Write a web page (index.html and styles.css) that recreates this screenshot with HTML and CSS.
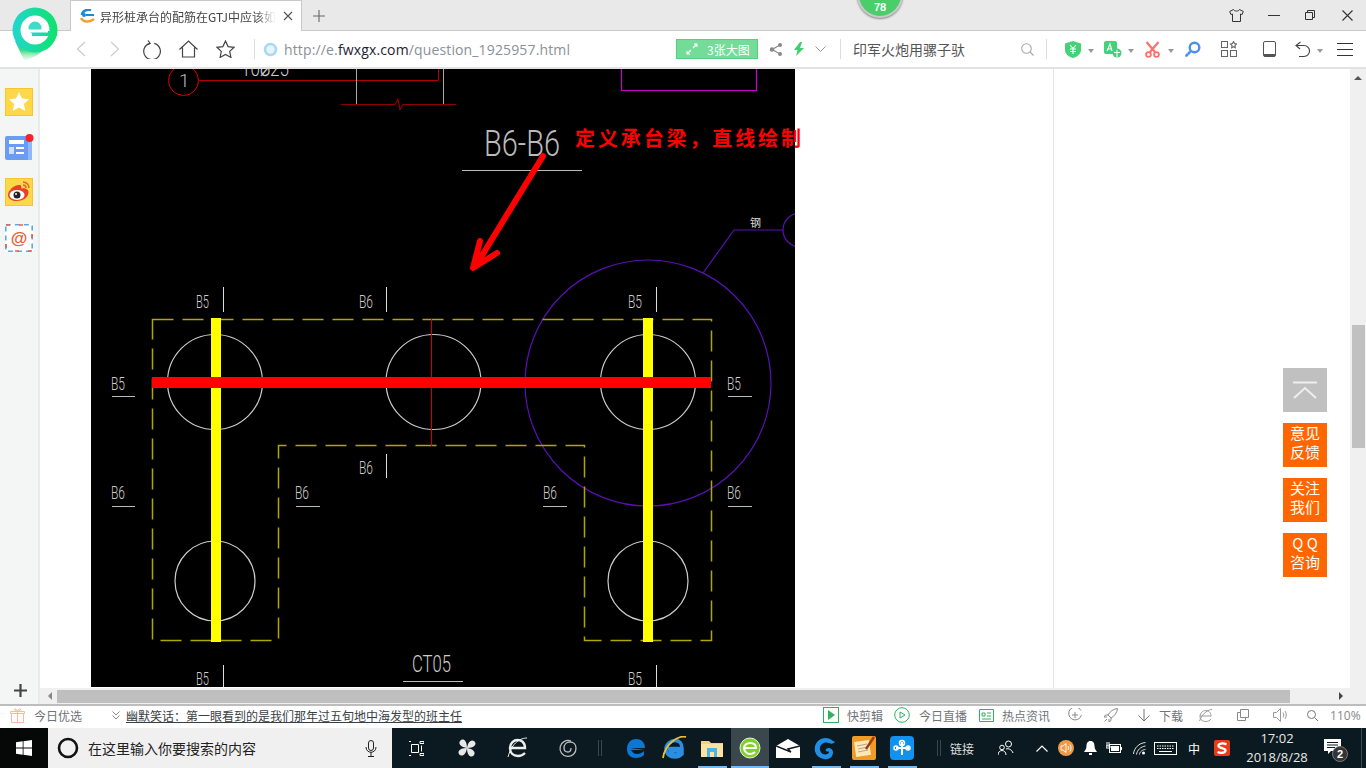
FILE: index.html
```html
<!DOCTYPE html>
<html lang="zh-CN">
<head>
<meta charset="utf-8">
<title>异形桩承台的配筋在GTJ中应该如何绘制</title>
<link rel="stylesheet" href="styles.css">
</head>
<body>
<div class="screen">
  <header class="tabbar">
    <div class="tab">
      <svg class="tab-ico" width="16" height="14" viewBox="0 0 16 14"><path d="M2 6C2 2 7 0 11 1" fill="none" stroke="#1e88d8" stroke-width="2.4"/><path d="M1 9c2 4 8 5 13 1" fill="none" stroke="#f0a030" stroke-width="2.4"/><path d="M6 6h8" stroke="#1e88d8" stroke-width="2"/><circle cx="4" cy="6" r="2" fill="#1e88d8"/></svg>
      <span class="tab-title">异形桩承台的配筋在GTJ中应该如</span>
      <svg class="tab-close" width="10" height="10" viewBox="0 0 10 10"><path d="M1 1l8 8M9 1l-8 8" stroke="#555" stroke-width="1.2"/></svg>
    </div>
    <svg class="tab-add" width="14" height="14" viewBox="0 0 14 14"><path d="M7 1v12M1 7h12" stroke="#666" stroke-width="1.1"/></svg>
    <div class="winctl">
      <svg width="15" height="13" viewBox="0 0 15 13"><path d="M4.5.5L.7 2.500l1.200 3 1.600-.5v7.500h8V5l1.600.5 1.200-3L10.500.5c-.5 2-5.500 2-6 0z" fill="none" stroke="#333" stroke-width="1"/></svg>
      <svg class="ml-24" width="12" height="12" viewBox="0 0 12 12"><path d="M0 6.500h12" stroke="#333"/></svg>
      <svg class="ml-25" width="10" height="10" viewBox="0 0 10 10"><path d="M.5 2.500h7v7h-7zM2.500 2.500v-2h7v7h-2" fill="none" stroke="#333"/></svg>
      <svg class="ml-27" width="11" height="11" viewBox="0 0 11 11"><path d="M.5.500l10 10M10.500.500l-10 10" stroke="#333" stroke-width="1.100"/></svg>
    </div>
  </header>

  <nav class="toolbar">
    <svg class="ml-76" width="10" height="16" viewBox="0 0 10 16"><path d="M9 1L1.500 8 9 15" fill="none" stroke="#ccc" stroke-width="1.200"/></svg>
    <svg class="ml-24" width="10" height="16" viewBox="0 0 10 16"><path d="M1 1l7.500 7L1 15" fill="none" stroke="#ccc" stroke-width="1.200"/></svg>
    <svg class="ml-23" width="18" height="19" viewBox="0 0 18 19"><path d="M5 .5l2.200 3L4 5M6.800 3.300a8.300 8.300 0 1 0 4.500 0" fill="none" stroke="#444" stroke-width="1.200"/></svg>
    <svg class="ml-18" width="19" height="18" viewBox="0 0 19 18"><path d="M.5 9.500L9.500 1l9 8.500M3.500 7.500v9.500h12V7.500" fill="none" stroke="#444" stroke-width="1.200"/></svg>
    <svg class="ml-18" width="19" height="18" viewBox="0 0 19 18"><path d="M9.500 1l2.600 5.600 6 .7-4.400 4.100 1.200 6-5.400-3-5.400 3 1.200-6L.9 7.300l6-.7z" fill="none" stroke="#444" stroke-width="1.200"/></svg>
    <i class="vsep ml-19"></i>
    <svg class="ml-8" width="15" height="15" viewBox="0 0 15 15"><circle cx="7.500" cy="7.500" r="6.800" fill="#a9d8f5"/><circle cx="7.500" cy="7.500" r="4.200" fill="#e6f5fd"/></svg>
    <span class="url ml-6">http://e.<b>fwxgx.com</b>/question_1925957.html</span>
    <span class="bigimg ml-106">
      <svg width="12" height="12" viewBox="0 0 12 12"><path d="M1 11l4-4M7 5l4-4M8 1h3v3M1 8v3h3" fill="none" stroke="#fff" stroke-width="1.100"/></svg>
      <span>3张大图</span>
    </span>
    <svg class="ml-12" width="12" height="13" viewBox="0 0 12 13"><path d="M10 2L2 6.500l8 4.500" fill="none" stroke="#888" stroke-width="1.200"/><circle cx="10" cy="2" r="2" fill="#888"/><circle cx="2" cy="6.500" r="2.200" fill="#888"/><circle cx="10" cy="11" r="2" fill="#888"/></svg>
    <svg class="ml-12" width="10" height="14" viewBox="0 0 10 14"><path d="M6 0L0 8h3.500L2 14l8-8H6l2-6z" fill="#3fd06c"/></svg>
    <svg class="ml-11" width="11" height="7" viewBox="0 0 11 7"><path d="M.5.500l5 5 5-5" fill="none" stroke="#999"/></svg>
    <i class="vsep ml-14"></i>
    <span class="searchtext ml-12">印军火炮用骡子驮</span>
    <svg class="ml-56" width="13" height="13" viewBox="0 0 13 13"><circle cx="5.500" cy="5.500" r="4.800" fill="none" stroke="#aaa" stroke-width="1.100"/><path d="M9 9l3.500 3.500" stroke="#aaa" stroke-width="1.200"/></svg>
    <i class="vsep ml-12"></i>
    <svg class="ml-18" width="16" height="17" viewBox="0 0 16 17"><path d="M8 0l8 2.500V9c0 4-4 7-8 8-4-1-8-4-8-8V2.500z" fill="#45d276"/><path d="M5 4l3 3.500L11 4M5 8h6M5 10.500h6M8 7.500V13" fill="none" stroke="#fff" stroke-width="1.100"/></svg>
    <i class="caret ml-7"></i>
    <svg class="ml-10" width="18" height="17" viewBox="0 0 18 17"><rect width="13" height="13" rx="2" fill="#45d276"/><path d="M3 10l3-7 2 7M4 8h3.500" fill="none" stroke="#fff" stroke-width="1.100"/><circle cx="13" cy="12" r="4.500" fill="#45d276"/><path d="M10 11.500h6M13 9v7" stroke="#fff"/></svg>
    <i class="caret ml-6"></i>
    <svg class="ml-11" width="15" height="17" viewBox="0 0 15 17"><path d="M1.500 1l8.500 10M13.500 1L5 11" stroke="#ff6f6f" stroke-width="2.200"/><circle cx="3.500" cy="13.500" r="2.400" fill="none" stroke="#ff6f6f" stroke-width="1.800"/><circle cx="11.500" cy="13.500" r="2.400" fill="none" stroke="#ff6f6f" stroke-width="1.800"/></svg>
    <i class="caret ml-8"></i>
    <svg class="ml-10" width="17" height="17" viewBox="0 0 17 17"><circle cx="10.500" cy="6.500" r="4.800" fill="none" stroke="#4d8ef0" stroke-width="2.400"/><path d="M7 10l-5.500 5.500M2 13l2 2M4 11l2 2" stroke="#4d8ef0" stroke-width="1.800"/></svg>
    <svg class="ml-20" width="16" height="16" viewBox="0 0 16 16"><path d="M.5.500h6v6h-6zM.5 9.500h6v6h-6zM9.500 9.500h6v6h-6zM12.500.5l1 2 2 .5-1.500 1.500.3 2.200-1.800-1-1.800 1 .3-2.200L9.500 3l2-.5z" fill="none" stroke="#666" stroke-width="1.100"/></svg>
    <svg class="ml-26" width="13" height="16" viewBox="0 0 13 16"><rect x=".5" y=".5" width="12" height="15" rx="1.500" fill="none" stroke="#555"/><rect x="1" y="13" width="11" height="2.500" fill="#555"/></svg>
    <svg class="ml-19" width="15" height="17" viewBox="0 0 15 17"><path d="M5.500 1L1 4.500 5 8M1.500 4.500H9a5.500 5.500 0 0 1 0 11H4" fill="none" stroke="#444" stroke-width="1.100"/></svg>
    <i class="caret ml-7"></i>
    <svg class="ml-14" width="16" height="13" viewBox="0 0 16 13"><path d="M0 .5h16M0 6.500h16M0 12.500h16" stroke="#333"/></svg>
  </nav>

  <div class="main">
    <aside class="sidebar">
      <div class="side-icons">
        <svg width="28" height="28" viewBox="0 0 28 28"><rect x=".5" y=".5" width="27" height="27" fill="#ffd84a" stroke="#f7c52e"/><path d="M14 4l3 6.500 7 .8-5.200 4.700 1.500 7L14 19.500 7.700 23l1.500-7L4 11.300l7-.8z" fill="#fff"/></svg>
        <svg width="29" height="26" viewBox="0 0 29 26"><rect y="2" width="27" height="24" rx="2" fill="#6a9cf5"/><rect x="23" y="2" width="4" height="24" fill="#8fb7fa"/><rect x="4" y="6" width="15" height="4" fill="#fff"/><rect x="4" y="13" width="5" height="7" fill="#cfe0fd"/><path d="M11 14h8M11 19h8" stroke="#fff" stroke-width="2"/><circle cx="24.500" cy="4" r="4" fill="#ff2020"/></svg>
        <svg width="28" height="28" viewBox="0 0 28 28"><rect x=".5" y=".5" width="27" height="27" fill="#ffd84a" stroke="#f7c52e"/><path d="M3 17c0-5 7-11 12-10 2 .5 1 3 1.500 3.500 2-1 7 0 7 3.500 0 6-6 9-12 9-4 0-8.500-2-8.500-6z" fill="#e8412a"/><ellipse cx="12" cy="17" rx="7.500" ry="5" fill="#fff"/><circle cx="12" cy="17" r="3.500" fill="#222"/><circle cx="11" cy="16" r="1" fill="#fff"/><path d="M18 4a6 6 0 0 1 6 6M18 7a3 3 0 0 1 3 3" fill="none" stroke="#e8612a" stroke-width="1.500"/></svg>
        <svg width="28" height="28" viewBox="0 0 28 28"><rect width="28" height="28" fill="#fff"/><rect x=".8" y=".8" width="26.400" height="26.400" fill="none" stroke="#58aaf0" stroke-width="1.600" stroke-dasharray="5 4"/><path d="M1 1h4M14 1h4M27 10v4M1 20v4M10 27h4M23 27h4" stroke="#f0603c" stroke-width="1.600"/><text class="at-sign" x="14" y="20">@</text></svg>
      </div>
      <svg class="side-add" width="13" height="13" viewBox="0 0 13 13"><path d="M6.500 0v13M0 6.500h13" stroke="#444" stroke-width="2.200"/></svg>
    </aside>

    <div class="viewport">
      <div class="page-row">
        <main class="article">
          <svg class="cad" width="704" height="618" viewBox="91 69 704 618">
            <svg x="91" y="69" width="704" height="618" viewBox="91 69 704 618">
              <rect x="91" y="69" width="704" height="618" fill="#000"/>
              <g fill="none">
                <circle cx="183.500" cy="80.500" r="15" stroke="#e00000"/>
                <path d="M199 80.500h239.500V69" stroke="#b00000"/>
                <path d="M356.500 69v35M443.500 69v35" stroke="#aaa"/>
                <path d="M341 104.500h54l3-5 2 10 3-5h53" stroke="#900000" stroke-width="1.200"/>
                <path d="M621.500 69v21.500h135V69" stroke="#c800c8" stroke-width="1.200"/>
                <path d="M462 170.500h120M112 396.500h23M728 396.500h24M112 506.500h23M296 506.500h24M543 506.500h24M728 506.500h24M403 681.500h60" stroke="#bbb"/>
                <path d="M223.500 287v25M386.500 287v25M656.500 287v25M386.500 454v24M223.500 665v22M656.500 665v22" stroke="#ddd"/>
                <circle cx="648" cy="383" r="123" stroke="#5a10b8" stroke-width="1.200"/>
                <path d="M703 273l31-43h49" stroke="#5a10b8" stroke-width="1.200"/>
                <circle cx="800" cy="230" r="17" stroke="#5a10b8" stroke-width="1.200"/>
                <path class="dash" d="M152.500 319.500h559v321h-127v-195h-306v195h-126z"/>
                <circle cx="215" cy="382" r="47.500" stroke="#ccc" stroke-width="1.200"/>
                <circle cx="433.500" cy="382" r="47.500" stroke="#ccc" stroke-width="1.200"/>
                <circle cx="648" cy="382" r="47.500" stroke="#ccc" stroke-width="1.200"/>
                <circle cx="215" cy="581" r="40" stroke="#ccc" stroke-width="1.200"/>
                <circle cx="648" cy="581" r="40" stroke="#ccc" stroke-width="1.200"/>
                <path d="M431.500 319v127" stroke="#d00000"/>
              </g>
              <rect x="211" y="318" width="10" height="324" fill="#ff0"/>
              <rect x="643" y="318" width="10" height="324" fill="#ff0"/>
              <rect x="152" y="377" width="559" height="11" fill="#f00"/>
              <text class="cad-big" x="484" y="156" textLength="76" lengthAdjust="spacingAndGlyphs">B6-B6</text>
              <path d="M543 156L478 262M480 241l-7 27 24-15" fill="none" stroke="#f00" stroke-width="6" stroke-linecap="round" stroke-linejoin="round"/>
              <text class="cad-small" x="750" y="227">钢</text>
              <text class="cad-mid" x="412" y="672" textLength="39" lengthAdjust="spacingAndGlyphs">CT05</text>
              <text class="cad-clip" x="241" y="76" textLength="48" lengthAdjust="spacingAndGlyphs">10⌀25</text>
              <text class="cad-one" x="179" y="87">1</text>
              <g class="cad-label">
                <text x="196" y="308" textLength="13" lengthAdjust="spacingAndGlyphs">B5</text>
                <text x="359" y="308" textLength="14" lengthAdjust="spacingAndGlyphs">B6</text>
                <text x="628" y="308" textLength="14" lengthAdjust="spacingAndGlyphs">B5</text>
                <text x="111" y="390" textLength="14" lengthAdjust="spacingAndGlyphs">B5</text>
                <text x="727" y="390" textLength="14" lengthAdjust="spacingAndGlyphs">B5</text>
                <text x="359" y="474" textLength="14" lengthAdjust="spacingAndGlyphs">B6</text>
                <text x="111" y="499" textLength="14" lengthAdjust="spacingAndGlyphs">B6</text>
                <text x="295" y="499" textLength="14" lengthAdjust="spacingAndGlyphs">B6</text>
                <text x="543" y="499" textLength="14" lengthAdjust="spacingAndGlyphs">B6</text>
                <text x="727" y="499" textLength="14" lengthAdjust="spacingAndGlyphs">B6</text>
                <text x="196" y="685" textLength="13" lengthAdjust="spacingAndGlyphs">B5</text>
                <text x="628" y="685" textLength="14" lengthAdjust="spacingAndGlyphs">B5</text>
              </g>
            </svg>
            <text class="cad-note" x="575" y="146" textLength="226">定义承台梁&#xFF0C;直线绘制</text>
          </svg>
        </main>
        <div class="rest"></div>
        <div class="vscroll">
          <i class="arrow-up"></i>
          <div class="vthumb"></div>
        </div>
      </div>
      <div class="hscroll">
        <i class="arrow-left"></i>
        <div class="hthumb"></div>
        <i class="arrow-right"></i>
      </div>
    </div>
  </div>

  <footer class="statusbar">
    <svg class="ml-10" width="15" height="15" viewBox="0 0 15 15"><path d="M1.500 5.500h12v9h-12zM.5 3.500h14v2H.5zM7.500 3.500v11M7.500 3.500C5 3.500 3.500 1 5 .8S7.500 3.500 7.500 3.500s1-3 2.500-2.700 0 2.700-2.500 2.700z" fill="none" stroke="#f9b99a"/></svg>
    <span class="ml-9">今日优选</span>
    <svg class="ml-30" width="8" height="9" viewBox="0 0 8 9"><path d="M.5.500L4 4l3.500-3.500M.5 4.500L4 8l3.500-3.500" fill="none" stroke="#888"/></svg>
    <a class="news ml-6">幽默笑话&#xFF1A;第一眼看到的是我们那年过五旬地中海发型的班主任</a>
    <svg class="ml-361" width="16" height="16" viewBox="0 0 16 16"><rect x=".5" y=".5" width="15" height="15" fill="none" stroke="#2fb15e"/><path d="M5 3l7 5-7 5z" fill="#2fb15e"/></svg>
    <span class="ml-8">快剪辑</span>
    <svg class="ml-11" width="16" height="16" viewBox="0 0 16 16"><circle cx="8" cy="8" r="7.300" fill="none" stroke="#2fb15e"/><path d="M6 5v6l5-3z" fill="none" stroke="#2fb15e"/></svg>
    <span class="ml-9">今日直播</span>
    <svg class="ml-12" width="15" height="15" viewBox="0 0 15 15"><path d="M.5 1.500h14v12H.5z" fill="none" stroke="#2fb15e"/><path d="M3 5h3v3H3zM8 5h4M8 8h4M3 11h9" fill="none" stroke="#2fb15e"/></svg>
    <span class="ml-8">热点资讯</span>
    <svg class="ml-18" width="14" height="14" viewBox="0 0 14 14"><path d="M13 2.500A6.500 6.500 0 1 0 13.500 7M7 4v6M4 7h6" fill="none" stroke="#888"/></svg>
    <svg class="ml-22" width="14" height="14" viewBox="0 0 14 14"><path d="M13.500.5C9 1 6 3.500 4 7l3 3c3.500-2 6-5 6.500-9.500zM4 7H1.500L0 9h3M7 10v2.500L5 14v-3M3 11l-2.500 2.500" fill="none" stroke="#888"/></svg>
    <svg class="ml-20" width="12" height="13" viewBox="0 0 12 13"><path d="M6 0v12M.5 6.500L6 12l5.500-5.500" fill="none" stroke="#777"/></svg>
    <span class="ml-9">下载</span>
    <svg class="ml-16" width="13" height="13" viewBox="0 0 13 13"><path d="M1 7h11C12 3 9 1.500 6.500 1.500S1 4 1 7.500 4 12.500 7 12.500c2 0 4-1 5-2.500M13 .5C10 .5 4 3 .5 12" fill="none" stroke="#999"/></svg>
    <svg class="ml-25" width="12" height="12" viewBox="0 0 12 12"><path d="M3.500.5h8v8h-8zM3.500 3.500H.5v8h8V8.500" fill="none" stroke="#888"/></svg>
    <svg class="ml-24" width="15" height="14" viewBox="0 0 15 14"><path d="M.5 4.500h3L7.500.5v13l-4-4h-3zM10 4.500c1 1.500 1 3.500 0 5M12 3c1.700 2.500 1.700 5.500 0 8" fill="none" stroke="#999"/></svg>
    <svg class="ml-19" width="11" height="11" viewBox="0 0 11 11"><circle cx="4.500" cy="4.500" r="4" fill="none" stroke="#777"/><path d="M7.500 7.500l3.500 3.500" stroke="#777"/></svg>
    <span class="ml-12 zoomv">110%</span>
  </footer>

  <div class="taskbar">
    <div class="start">
      <svg width="16" height="16" viewBox="0 0 16 16"><path d="M0 2.300l6.700-1V7.500H0zM7.500 1.200L16 0v7.500H7.500zM0 8.400h6.700v6.300L0 13.700zM7.500 8.400H16V16l-8.500-1.200z" fill="#fff"/></svg>
    </div>
    <div class="tsearch">
      <svg width="22" height="22" viewBox="0 0 22 22"><circle cx="11" cy="11" r="9" fill="none" stroke="#111" stroke-width="2.600"/></svg>
      <span class="tsearch-text">在这里输入你要搜索的内容</span>
      <svg class="mic" width="12" height="17" viewBox="0 0 12 17"><rect x="3.500" y=".5" width="5" height="10" rx="2.500" fill="none" stroke="#222"/><path d="M1 7c0 7 10 7 10 0M6 12v4M3 16.500h6" fill="none" stroke="#222"/></svg>
    </div>
    <div class="tcell wide48"><svg width="15" height="15" viewBox="0 0 15 15"><path d="M0 .5h2M0 14.500h2M2.500 3.500h7v8h-7zM11 .5h4v2h-4zM12.500 4.500v6M11 12.500h4v2h-4z" fill="none" stroke="#fff"/></svg></div>
    <div class="tcell wide50 ml-2"><svg width="20" height="20" viewBox="0 0 20 20"><path d="M10 10C4 9 1 6 3 3c2-3 7-2 7 7zM10 10c1-6 4-9 7-7 3 2 2 7-7 7zM10 10c6 1 9 4 7 7-2 3-7 2-7-7zM10 10c-1 6-4 9-7 7-3-2-2-7 7-7z" fill="#e8e8e8"/></svg></div>
    <div class="tcell wide50"><svg width="21" height="22" viewBox="0 0 21 22"><path d="M4 11h14C18 5 14 3 10.500 3S3 6 3 11s3.500 8 8 8c3 0 5-1 7-3" fill="none" stroke="#eee" stroke-width="2.400"/><path d="M20 1C14 1 5 5 1 20" fill="none" stroke="#eee"/></svg></div>
    <div class="tcell wide50"><svg width="20" height="20" viewBox="0 0 20 20"><path d="M14 3a8 8 0 1 0 5 7c0-4-3-6-6-6-4 0-6 3-6 6s2 4 4 4 3-2 3-4" fill="none" stroke="#bbb" stroke-width="1.300"/></svg></div>
    <div class="tsep-cell"><i class="tsep"></i></div>
    <div class="tcell app"><svg width="20" height="21" viewBox="0 0 20 21"><path d="M4 10h15C19 4 15 1 10 1S1 5 1 11s4 9 9 9c3 0 6-1 8-3v-4c-2 2-4 3-7 3s-5-2-6-4h14" fill="#0a78d7"/></svg></div>
    <div class="tcell app"><svg width="25" height="24" viewBox="0 0 25 24"><path d="M6 12.500h14C20 7 17 4.500 13 4.500S4 8 4 13s4 8 9 8c3 0 5-1 7-3v-2c-2 2-4 3-6.500 3S8 17 8 15h12" fill="none" stroke="#2a8fe0" stroke-width="3.500"/><path d="M24 1C16-1 3 8 1 22" fill="none" stroke="#f0c030" stroke-width="1.800"/></svg></div>
    <div class="tcell app run"><svg width="22" height="18" viewBox="0 0 22 18"><path d="M0 2h8l2 2h12v14H0z" fill="#f4d27a"/><path d="M0 5h22v13H0z" fill="#f9e39e"/><rect x="6" y="9" width="10" height="9" fill="#4db3ea"/><rect x="9" y="13" width="4" height="5" fill="#f9e39e"/></svg></div>
    <div class="tcell app active"><svg width="22" height="22" viewBox="0 0 22 22"><circle cx="11" cy="11" r="10" fill="#7fd02c"/><circle cx="11" cy="11" r="10" fill="none" stroke="#e6f5d2"/><path d="M5 11h12C17 7 14 6 11 6s-6 2-6 5 3 6 6 6c2 0 4-1 5-2" fill="none" stroke="#fff" stroke-width="2"/></svg></div>
    <div class="tcell app"><svg width="24" height="19" viewBox="0 0 24 19"><path d="M0 7L12 0l12 7v12H0z" fill="#fff"/><path d="M0 7l15 6-3-3 12-3" fill="none" stroke="#0c1a20" stroke-width="1.400"/></svg></div>
    <div class="tcell app run"><svg width="24" height="23" viewBox="0 0 24 23"><path d="M19 4C15 0 8 0 4 4-1 9 0 17 5 20c4 3 11 3 13-1 2-3 1-8-3-8-3 0-4 2-3 3s3 0 3 1c0 3-8 4-9-2-1-5 4-9 9-7 2 1 4 1 6-1z" fill="#1e90e8"/></svg></div>
    <div class="tcell app run"><svg width="24" height="24" viewBox="0 0 24 24"><rect width="24" height="24" rx="2" fill="#f09a28"/><rect x="3" y="5" width="15" height="15" transform="rotate(-8 10 12)" fill="#fbe9b8"/><path d="M5 10l10-2M6 13l10-2M6 16l10-2" stroke="#b98" stroke-width=".9"/><path d="M22 1L14 13" stroke="#a03a10" stroke-width="2.400"/></svg></div>
    <div class="tcell app run"><svg width="24" height="24" viewBox="0 0 24 24"><rect width="24" height="24" rx="4" fill="#1092ee"/><path d="M12 6v13M6 12h13" stroke="#fff" stroke-width="2"/><circle cx="12" cy="7" r="2.500" fill="none" stroke="#fff" stroke-width="1.500"/><circle cx="6" cy="12" r="2" fill="none" stroke="#fff" stroke-width="1.500"/><circle cx="18" cy="12" r="2" fill="none" stroke="#fff" stroke-width="1.500"/></svg></div>
    <i class="tsep ml-16"></i>
    <span class="tlink ml-9">链接</span>
    <svg class="ml-24" width="16" height="16" viewBox="0 0 16 16"><circle cx="10.500" cy="4" r="3" fill="none" stroke="#fff"/><circle cx="4" cy="7.500" r="2.300" fill="none" stroke="#fff"/><path d="M8 9c3-1 6 1 7 4M0 15c0-3 2-4.500 4-4.500S8 12 8 15" fill="none" stroke="#fff"/></svg>
    <svg class="ml-22" width="12" height="7" viewBox="0 0 12 7"><path d="M.5 6.500L6 1l5.500 5.500" fill="none" stroke="#fff" stroke-width="1.200"/></svg>
    <svg class="ml-10" width="16" height="16" viewBox="0 0 16 16"><circle cx="8" cy="8" r="8" fill="#f09a48"/><path d="M3 6h2l3-2.500v9L5 10H3zM10 6c.7 1.300.7 2.700 0 4M12 4.500c1.300 2.200 1.300 4.800 0 7" fill="none" stroke="#fff" stroke-width=".9"/></svg>
    <svg class="ml-10" width="13" height="14" viewBox="0 0 13 14"><path d="M6.500 0C3.500 0 2.500 2.500 2.500 5c0 3-1.500 4-2.500 6h13c-1-2-2.500-3-2.500-6 0-2.500-1-5-4-5z" fill="#fff"/><rect x="5" y="12" width="3" height="2" fill="#fff"/></svg>
    <svg class="ml-9" width="16" height="12" viewBox="0 0 16 12"><rect x="3.500" y="2.500" width="11" height="8" fill="none" stroke="#fff"/><rect x="5" y="4" width="8" height="5" fill="#fff"/><rect x="15" y="5" width="1" height="3" fill="#fff"/><path d="M1 0v4M3 0v4M0 4h4v2H0z" stroke="#fff" fill="none"/></svg>
    <svg class="ml-11" width="13" height="13" viewBox="0 0 13 13"><path d="M.5 12C1 6 6 1 12.500.5M3.500 12.500C4 8 8 4.500 12.500 4M6.500 12.500c0-2.500 3-5 6-5" fill="none" stroke="#ddd"/><circle cx="10.500" cy="11" r="1.500" fill="#fff"/></svg>
    <svg class="ml-8" width="23" height="13" viewBox="0 0 23 13"><rect x=".5" y=".5" width="22" height="12" fill="none" stroke="#fff"/><path d="M3 4h17M3 6.500h17" stroke="#fff" stroke-dasharray="1.500 1"/><path d="M5 9.500h13" stroke="#fff"/></svg>
    <span class="tlang ml-11">中</span>
    <svg class="ml-14" width="16" height="16" viewBox="0 0 16 16"><rect width="16" height="16" rx="2" fill="#e83c18"/><path d="M12.500 4.500C9 2.500 4 3.500 4.500 6s7 2 7 4.500-5 3-8 1.500" fill="none" stroke="#fff" stroke-width="2.300"/></svg>
    <div class="clock ml-17"><span>17:02</span><span>2018/8/28</span></div>
    <div class="notif ml-17">
      <svg width="17" height="16" viewBox="0 0 17 16"><path d="M0 0h17v12H7l-3 3v-3H0z" fill="#fff"/><path d="M3 3.500h11M3 6h11M3 8.500h8" stroke="#0c1a20"/></svg>
      <span class="notif-badge">2</span>
    </div>
    <i class="desk-line"></i>
  </div>

  <div class="logo">
    <svg width="46" height="54" viewBox="0 0 46 54">
      <defs>
        <linearGradient id="lg" x1="0" y1="0" x2="1" y2="0"><stop offset="0" stop-color="#22d6cf"/><stop offset="1" stop-color="#0ee36c"/></linearGradient>
        <linearGradient id="lt" x1="0" y1="0" x2="0" y2="1"><stop offset="0" stop-color="#25b8ea"/><stop offset=".5" stop-color="#3fdf7a"/><stop offset="1" stop-color="#c8f0d8" stop-opacity=".4"/></linearGradient>
      </defs>
      <path d="M3 34l9 19c8-1 20-7 24-17z" fill="url(#lt)"/>
      <circle cx="23" cy="23" r="22.500" fill="url(#lg)"/>
      <circle cx="23" cy="23" r="14.500" fill="#fff"/>
      <circle cx="23" cy="21" r="6.500" fill="#3cdcc8"/>
      <path d="M20 24h25v5H20z" fill="url(#lg)"/>
      <path d="M10 22.500h26v3H10z" fill="#fff"/>
    </svg>
  </div>
  <div class="score">78</div>

  <div class="floatbar">
    <div class="fb-top"><svg width="24" height="18" viewBox="0 0 24 18"><path d="M0 1.500h24M1 17L12 7l11 10" fill="none" stroke="#eee" stroke-width="2"/></svg></div>
    <div class="fb">意见<br>反馈</div>
    <div class="fb">关注<br>我们</div>
    <div class="fb">Q Q<br>咨询</div>
  </div>
</div>
</body>
</html>
```
FILE: styles.css
```css
* { box-sizing: border-box; }
html, body { margin: 0; padding: 0; }
body { font-family: "Noto Sans CJK SC", "Noto Sans", sans-serif; font-size: 12px; color: #555; overflow: hidden; }
i { display: block; font-style: normal; }
svg { display: block; flex: none; }

.ml-2 { margin-left: 2px; } .ml-6 { margin-left: 6px; } .ml-7 { margin-left: 7px; } .ml-8 { margin-left: 8px; }
.ml-9 { margin-left: 9px; } .ml-10 { margin-left: 10px; } .ml-11 { margin-left: 11px; } .ml-12 { margin-left: 12px; }
.ml-14 { margin-left: 14px; } .ml-16 { margin-left: 16px; } .ml-17 { margin-left: 17px; } .ml-18 { margin-left: 18px; }
.ml-19 { margin-left: 19px; } .ml-20 { margin-left: 20px; } .ml-22 { margin-left: 22px; } .ml-23 { margin-left: 23px; }
.ml-24 { margin-left: 24px; } .ml-25 { margin-left: 25px; } .ml-26 { margin-left: 26px; } .ml-27 { margin-left: 27px; }
.ml-30 { margin-left: 30px; } .ml-56 { margin-left: 56px; } .ml-76 { margin-left: 76px; } .ml-106 { margin-left: 106px; }
.ml-361 { margin-left: 361px; }

.screen { position: relative; width: 1366px; height: 768px; display: flex; flex-direction: column; overflow: hidden; background: #fff; }

/* tabs */
.tabbar { height: 31px; flex: none; display: flex; align-items: flex-start; padding-left: 70px; background: #e9e9e9; border-bottom: 1px solid #c9c9c9; }
.tab { width: 232px; height: 31px; display: flex; align-items: center; background: #fff; border: 1px solid #c9c9c9; border-bottom: 0; padding-left: 9px; }
.tab-title { width: 176px; margin-left: 4px; overflow: hidden; white-space: nowrap; font-size: 12px; color: #444; -webkit-mask-image: linear-gradient(90deg, #000 88%, transparent); mask-image: linear-gradient(90deg, #000 88%, transparent); }
.tab-close { margin-left: 7px; }
.tab-add { margin: 9px 0 0 10px; }
.winctl { margin-left: auto; height: 30px; display: flex; align-items: center; padding-right: 13px; }

/* address bar */
.toolbar { height: 38px; flex: none; display: flex; align-items: center; background: #fff; border-bottom: 2px solid #e2e2e2; }
.vsep { width: 1px; height: 20px; background: #ddd; }
.url { width: 286px; font-family: "Open Sans", "Liberation Sans", sans-serif; font-size: 14px; letter-spacing: .14px; color: #8a909a; white-space: nowrap; }
.url b { font-weight: 400; color: #1c2430; }
.bigimg { width: 82px; height: 20px; display: flex; align-items: center; padding-left: 9px; background: #72dc98; border: 1px solid #55d07f; color: #fff; font-size: 12px; }
.bigimg span { margin-left: 9px; white-space: nowrap; }
.searchtext { width: 112px; font-size: 14px; line-height: 18px; color: #555; white-space: nowrap; }
.caret { width: 0; height: 0; border-left: 3px solid transparent; border-right: 3px solid transparent; border-top: 4px solid #999; margin-top: 3px; }

/* main */
.main { height: 635px; flex: none; display: flex; }
.sidebar { width: 40px; flex: none; display: flex; flex-direction: column; background: #f4f6f6; border-right: 2px solid #e9eaea; padding: 19px 0 7px 5px; }
.side-icons { display: flex; flex-direction: column; gap: 18px; }
.side-add { margin: auto 0 0 9px; }
.at-sign { font-family: "Liberation Sans", sans-serif; font-size: 17px; font-weight: 700; fill: #ee5a3c; text-anchor: middle; }
.viewport { flex: 1; min-width: 0; display: flex; flex-direction: column; }
.page-row { height: 619px; flex: none; display: flex; }
.article { width: 1014px; flex: none; padding-left: 51px; background: #fff; border-right: 1px solid #e5e5e5; }
.rest { flex: 1; background: #fff; }
.vscroll { width: 16px; flex: none; background: #f0f0f0; display: flex; flex-direction: column; align-items: center; }
.arrow-up { margin-top: 7px; width: 0; height: 0; border-left: 4px solid transparent; border-right: 4px solid transparent; border-bottom: 4px solid #555; }
.vthumb { width: 13px; height: 123px; margin-top: 245px; background: #c1c1c1; }
.hscroll { height: 16px; flex: none; display: flex; align-items: center; background: #f0f0f0; padding: 0 0 0 8px; }
.arrow-left { width: 0; height: 0; border-top: 4px solid transparent; border-bottom: 4px solid transparent; border-right: 4px solid #888; }
.hthumb { width: 1233px; height: 13px; margin-left: 5px; background: #bfbfbf; }
.arrow-right { width: 0; height: 0; margin-left: 49px; border-top: 4px solid transparent; border-bottom: 4px solid transparent; border-left: 4px solid #444; }

/* drawing */
.cad { display: block; overflow: visible; }
.dash { stroke: #b0a600; stroke-width: 1.500; stroke-dasharray: 21 9; }
.cad-label text { font-family: Roboto, "Liberation Sans", sans-serif; font-weight: 300; font-size: 19px; fill: #ccc; }
.cad-big { font-family: Roboto, "Liberation Sans", sans-serif; font-weight: 300; font-size: 36px; fill: #bbb; }
.cad-mid { font-family: Roboto, "Liberation Sans", sans-serif; font-weight: 300; font-size: 24px; fill: #ccc; }
.cad-clip { font-family: Roboto, "Liberation Sans", sans-serif; font-weight: 300; font-size: 20px; fill: #ccc; }
.cad-one { font-family: Roboto, "Liberation Sans", sans-serif; font-weight: 300; font-size: 19px; fill: #bbb; }
.cad-small { font-family: "Noto Sans CJK SC", sans-serif; font-size: 11px; fill: #ddd; }
.cad-note { font-family: "Noto Sans CJK SC", sans-serif; font-weight: 700; font-size: 20px; fill: #f00; }

/* status */
.statusbar { height: 24px; flex: none; display: flex; align-items: center; padding-bottom: 4px; background: #fff; border-top: 2px solid #bdbdbd; font-size: 12px; color: #6f7478; white-space: nowrap; }
.news { width: 336px; color: #3a3f45; text-decoration: underline; }
.zoomv { font-family: "Open Sans", sans-serif; color: #888; }

/* taskbar */
.taskbar { height: 40px; flex: none; display: flex; align-items: center; background: #0b1a20; color: #e8e8e8; }
.start { width: 48px; height: 40px; flex: none; display: flex; align-items: center; justify-content: center; background: #060707; }
.tsearch { width: 344px; height: 40px; flex: none; display: flex; align-items: center; padding-left: 9px; background: #f0f0f0; color: #222; }
.tsearch-text { margin-left: 9px; font-size: 14px; white-space: nowrap; }
.mic { margin-left: auto; margin-right: 15px; }
.tcell { height: 40px; flex: none; display: flex; align-items: center; justify-content: center; position: relative; }
.wide48 { width: 48px; }
.wide50 { width: 50px; }
.app { width: 38px; }
.run::after { content: ""; position: absolute; left: 5px; right: 4px; bottom: 0; height: 2px; background: #76b9ed; }
.active { background: #3a474d; box-shadow: inset 0 -2px 0 #76b9ed; }
.tsep-cell { width: 25px; height: 40px; flex: none; display: flex; align-items: center; padding-left: 6px; }
.tsep { width: 4px; height: 16px; border-left: 1px solid #39464b; border-right: 1px solid #39464b; }
.tlink { width: 24px; font-size: 12px; white-space: nowrap; color: #ddd; }
.tlang { font-size: 12px; color: #fff; }
.clock { width: 60px; display: flex; flex-direction: column; align-items: center; font-family: "Open Sans", sans-serif; font-size: 13px; line-height: 19px; color: #e8e8e8; white-space: nowrap; }
.notif { position: relative; width: 25px; height: 30px; padding-top: 6px; }
.notif-badge { position: absolute; left: 8px; top: 13px; width: 16px; height: 16px; border-radius: 50%; background: #333; border: 1px solid #777; color: #fff; font-family: "Liberation Sans", sans-serif; font-size: 11px; font-weight: 700; line-height: 14px; text-align: center; }
.desk-line { width: 1px; height: 40px; margin-left: 12px; background: #3a4a50; }

/* overlays */
.logo { position: absolute; left: 12px; top: 7px; }
.score { position: absolute; left: 857px; top: -28px; width: 46px; height: 46px; border-radius: 50%; background: #4bce6a; border: 2px solid #c9c9c9; box-shadow: 0 1px 2px #888; color: #fff; font-family: "Liberation Sans", sans-serif; font-weight: 700; font-size: 11px; line-height: 13px; padding-top: 27px; text-align: center; }
.floatbar { position: absolute; left: 1283px; top: 368px; width: 44px; display: flex; flex-direction: column; gap: 11px; }
.fb-top { height: 44px; display: flex; align-items: center; justify-content: center; background: #c0c0c0; }
.fb { height: 44px; background: #ff6600; color: #fff; font-size: 15px; line-height: 19px; text-align: center; }
```
